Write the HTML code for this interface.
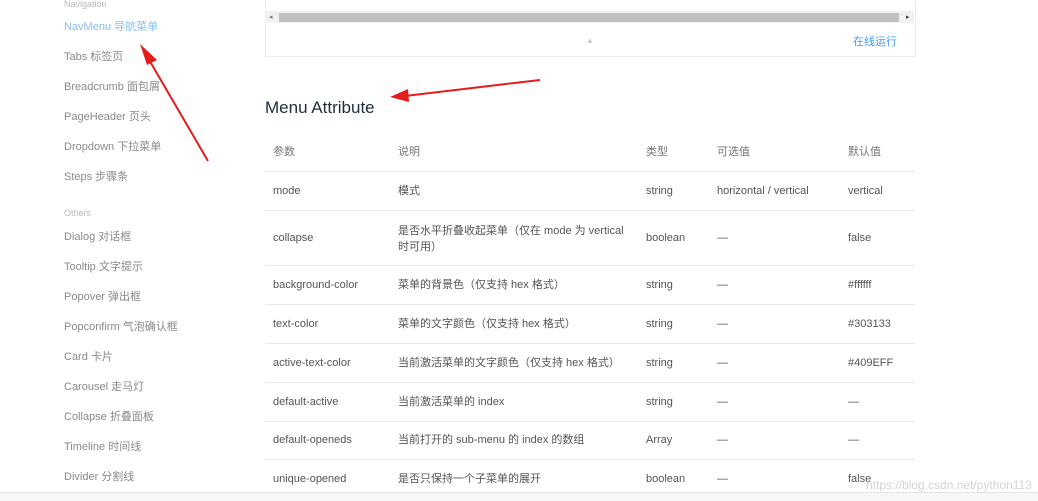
<!DOCTYPE html>
<html><head><meta charset="utf-8"><style>
body{margin:0;width:1038px;height:500px;overflow:hidden;background:#fff;font-family:"Liberation Sans","Noto Sans CJK SC",sans-serif;position:relative}
.s{position:absolute;left:64px;font-size:11px;color:#8a8a8a;white-space:nowrap;line-height:14px}
.g{font-size:9px;color:#b8b8b8}
.box{position:absolute;left:265px;top:-2px;width:649px;height:58px;border:1px solid #eaeef4;border-top:none}
.t{position:absolute;font-size:11px;color:#555;white-space:nowrap;line-height:14px}
.h{color:#777}
.l{position:absolute;left:265px;width:650px;height:1px;background:#e6e9ee}
</style></head><body>
<div class="s g" style="top:-3px">Navigation</div>
<div class="s" style="top:20px;color:#83bff5">NavMenu 导航菜单</div>
<div class="s" style="top:50px">Tabs 标签页</div>
<div class="s" style="top:80px">Breadcrumb 面包屑</div>
<div class="s" style="top:110px">PageHeader 页头</div>
<div class="s" style="top:140px">Dropdown 下拉菜单</div>
<div class="s" style="top:170px">Steps 步骤条</div>
<div class="s g" style="top:206px">Others</div>
<div class="s" style="top:230px">Dialog 对话框</div>
<div class="s" style="top:260px">Tooltip 文字提示</div>
<div class="s" style="top:290px">Popover 弹出框</div>
<div class="s" style="top:320px">Popconfirm 气泡确认框</div>
<div class="s" style="top:350px">Card 卡片</div>
<div class="s" style="top:380px">Carousel 走马灯</div>
<div class="s" style="top:410px">Collapse 折叠面板</div>
<div class="s" style="top:440px">Timeline 时间线</div>
<div class="s" style="top:470px">Divider 分割线</div>

<div class="box"></div>
<div style="position:absolute;left:266px;top:11px;width:648px;height:12px;background:#f1f1f1"></div>
<div style="position:absolute;left:279px;top:13px;width:620px;height:9px;background:#c1c1c1"></div>
<div style="position:absolute;left:269px;top:13px;font-size:7px;color:#777">◂</div>
<div style="position:absolute;left:906px;top:13px;font-size:7px;color:#444">▸</div>
<div style="position:absolute;left:586px;top:36px;font-size:8px;color:#ccc">▲</div>
<div class="t" style="left:853px;top:35px;color:#409eff">在线运行</div>

<div style="position:absolute;left:265px;top:98px;font-size:17px;color:#1f2d3d">Menu Attribute</div>

<div class="t h" style="left:273px;top:145px">参数</div><div class="t h" style="left:398px;top:145px">说明</div><div class="t h" style="left:646px;top:145px">类型</div><div class="t h" style="left:717px;top:145px">可选值</div><div class="t h" style="left:848px;top:145px">默认值</div>
<div class="l" style="top:171px"></div>
<div class="t" style="left:273px;top:184px">mode</div><div class="t" style="left:398px;top:184px">模式</div><div class="t" style="left:646px;top:184px">string</div><div class="t" style="left:717px;top:184px">horizontal / vertical</div><div class="t" style="left:848px;top:184px">vertical</div>
<div class="l" style="top:210px"></div>
<div class="t" style="left:273px;top:231px">collapse</div><div class="t" style="left:398px;top:223px;line-height:16px">是否水平折叠收起菜单（仅在 mode 为 vertical<br>时可用）</div><div class="t" style="left:646px;top:231px">boolean</div><div class="t" style="left:717px;top:231px">—</div><div class="t" style="left:848px;top:231px">false</div>
<div class="l" style="top:265px"></div>
<div class="t" style="left:273px;top:278px">background-color</div><div class="t" style="left:398px;top:278px">菜单的背景色（仅支持 hex 格式）</div><div class="t" style="left:646px;top:278px">string</div><div class="t" style="left:717px;top:278px">—</div><div class="t" style="left:848px;top:278px">#ffffff</div>
<div class="l" style="top:304px"></div>
<div class="t" style="left:273px;top:317px">text-color</div><div class="t" style="left:398px;top:317px">菜单的文字颜色（仅支持 hex 格式）</div><div class="t" style="left:646px;top:317px">string</div><div class="t" style="left:717px;top:317px">—</div><div class="t" style="left:848px;top:317px">#303133</div>
<div class="l" style="top:343px"></div>
<div class="t" style="left:273px;top:356px">active-text-color</div><div class="t" style="left:398px;top:356px">当前激活菜单的文字颜色（仅支持 hex 格式）</div><div class="t" style="left:646px;top:356px">string</div><div class="t" style="left:717px;top:356px">—</div><div class="t" style="left:848px;top:356px">#409EFF</div>
<div class="l" style="top:382px"></div>
<div class="t" style="left:273px;top:395px">default-active</div><div class="t" style="left:398px;top:395px">当前激活菜单的 index</div><div class="t" style="left:646px;top:395px">string</div><div class="t" style="left:717px;top:395px">—</div><div class="t" style="left:848px;top:395px">—</div>
<div class="l" style="top:421px"></div>
<div class="t" style="left:273px;top:433px">default-openeds</div><div class="t" style="left:398px;top:433px">当前打开的 sub-menu 的 index 的数组</div><div class="t" style="left:646px;top:433px">Array</div><div class="t" style="left:717px;top:433px">—</div><div class="t" style="left:848px;top:433px">—</div>
<div class="l" style="top:459px"></div>
<div class="t" style="left:273px;top:472px">unique-opened</div><div class="t" style="left:398px;top:472px">是否只保持一个子菜单的展开</div><div class="t" style="left:646px;top:472px">boolean</div><div class="t" style="left:717px;top:472px">—</div><div class="t" style="left:848px;top:472px">false</div>
<div style="position:absolute;left:0;top:492px;width:1038px;height:8px;background:#f7f7f7;border-top:1px solid #e5e5e5"></div>
<div style="position:absolute;left:866px;top:478px;font-size:12px;color:rgba(200,200,200,.8)">https://blog.csdn.net/python113</div>

<svg style="position:absolute;left:0;top:0" width="1038" height="500">
<line x1="208" y1="161" x2="148" y2="58" stroke="#e51c1c" stroke-width="2"/>
<polygon points="140,44 157,60 147,65" fill="#e51c1c"/>
<line x1="540" y1="80" x2="405" y2="96" stroke="#e51c1c" stroke-width="2"/>
<polygon points="390,97 408,89 409,102" fill="#e51c1c"/>
</svg>
</body></html>
